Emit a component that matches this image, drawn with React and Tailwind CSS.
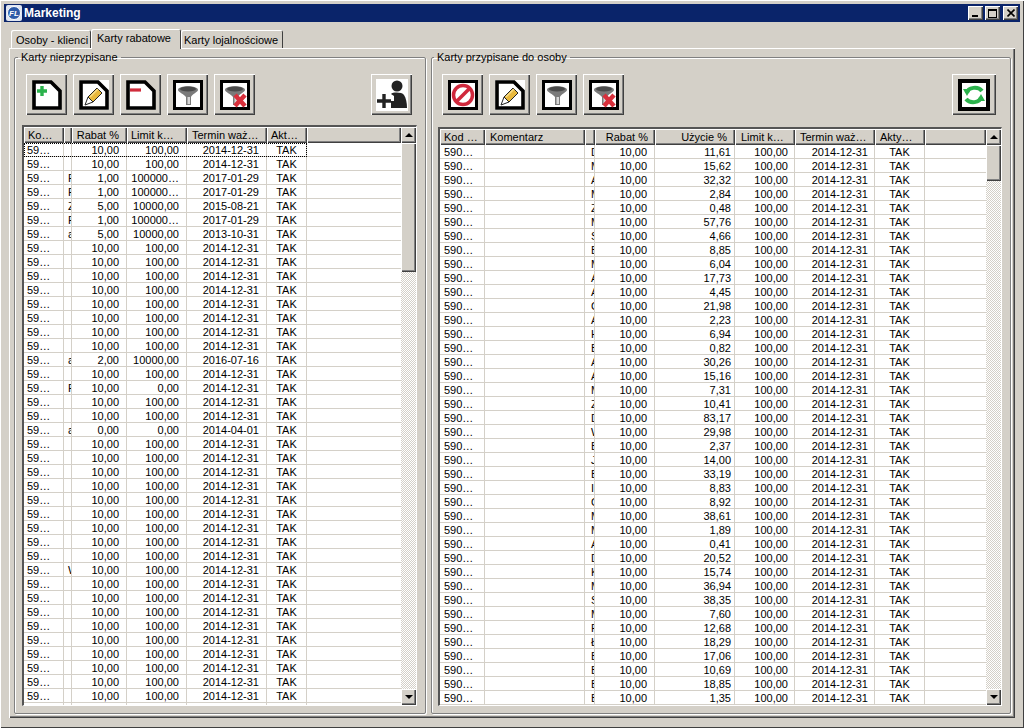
// App.jsx
const raised = 'bg-[#d4d0c8] shadow-[inset_1px_1px_0_#fff,inset_-1px_-1px_0_#404040,inset_-2px_-2px_0_#808080]';

const leftCols = [
  { w: 'w-[40px]', head: 'Ko…', cell: 'pl-[3px]', headCell: 'pl-[4px]' },
  { w: 'w-[8px]', head: '', cell: 'pl-[4px]', headCell: '' },
  { w: 'w-[55px]', head: 'Rabat %', cell: 'text-right pr-[7px]', headCell: 'text-right pr-[8px]' },
  { w: 'w-[60px]', head: 'Limit k…', cell: 'text-right pr-[7px]', headCell: 'pl-[4px]' },
  { w: 'w-[80px]', head: 'Termin waż…', cell: 'text-right pr-[7px]', headCell: 'pl-[5px]' },
  { w: 'w-[40px]', head: 'Akt…', cell: 'text-center', headCell: 'pl-[4px]' },
];

const rightCols = [
  { w: 'w-[45px]', head: 'Kod …', cell: 'pl-[4px]', headCell: 'pl-[4px]' },
  { w: 'w-[100px]', head: 'Komentarz', cell: '', headCell: 'pl-[5px]' },
  { w: 'w-[10px]', head: '', cell: 'pl-[6px]', headCell: '' },
  { w: 'w-[60px]', head: 'Rabat %', cell: 'text-right pr-[7px]', headCell: 'text-right pr-[7px]' },
  { w: 'w-[80px]', head: 'Użycie %', cell: 'text-right pr-[3px]', headCell: 'text-right pr-[8px]' },
  { w: 'w-[60px]', head: 'Limit k…', cell: 'text-right pr-[6px]', headCell: 'pl-[6px]' },
  { w: 'w-[80px]', head: 'Termin waż…', cell: 'text-right pr-[6px]', headCell: 'pl-[5px]' },
  { w: 'w-[50px]', head: 'Akty…', cell: 'text-center', headCell: 'pl-[5px]' },
];

const def = ['59…', '', '10,00', '100,00', '2014-12-31', 'TAK'];
const fcard = ['59…', 'F', '1,00', '100000…', '2017-01-29', 'TAK'];
const leftRows = Array.from({ length: 40 }, () => def);
leftRows[2] = fcard;
leftRows[3] = fcard;
leftRows[4] = ['59…', 'Z', '5,00', '10000,00', '2015-08-21', 'TAK'];
leftRows[5] = fcard;
leftRows[6] = ['59…', 'a', '5,00', '10000,00', '2013-10-31', 'TAK'];
leftRows[15] = ['59…', 'a', '2,00', '10000,00', '2016-07-16', 'TAK'];
leftRows[17] = ['59…', 'F', '10,00', '0,00', '2014-12-31', 'TAK'];
leftRows[20] = ['59…', 'a', '0,00', '0,00', '2014-04-01', 'TAK'];
leftRows[30] = ['59…', 'W', '10,00', '100,00', '2014-12-31', 'TAK'];
leftRows.push(['', '', '', '', '', '']);

const letters = 'D M A M Z M S B M A A C A H B A A M Z D W B J B I G M M A D K M S M R Ł B B B B'.split(' ');
const usage = '11,61 15,62 32,32 2,84 0,48 57,76 4,66 8,85 6,04 17,73 4,45 21,98 2,23 6,94 0,82 30,26 15,16 7,31 10,41 83,17 29,98 2,37 14,00 33,19 8,83 8,92 38,61 1,89 0,41 20,52 15,74 36,94 38,35 7,60 12,68 18,29 17,06 10,69 18,85 1,35'.split(' ');
const rightRows = usage.map((u, i) => ['590…', '', letters[i], '10,00', u, '100,00', '2014-12-31', 'TAK']);

function Doc({ children, corner }) {
  return (
    <svg viewBox="0 0 30 30" className="w-[30px] h-[30px]">
      {corner && <rect x="0" y="0" width="30" height="30" fill="#fff" />}
      <path d="M2 2H19L28 11V28H2Z" fill="#fff" stroke="#000" strokeWidth="3.6" />
      {children}
    </svg>
  );
}

function Frame({ children }) {
  return (
    <svg viewBox="0 0 30 30" className="w-[30px] h-[30px]">
      <rect x="1.5" y="1.5" width="27" height="27" fill="#fff" stroke="#000" strokeWidth="3" />
      {children}
    </svg>
  );
}

const Pencil = () => (
  <g>
    <path d="M9 17L18 8L23 13L14 22Z" fill="#e8b83c" stroke="#222" strokeWidth="1" />
    <path d="M9 17L6 25L14 22Z" fill="#fff" stroke="#222" strokeWidth="1" />
    <path d="M11 17L19 9" stroke="#f6dc8a" strokeWidth="1.5" />
  </g>
);

const Funnel = () => (
  <g>
    <path d="M5 10C5 5 25 5 25 10C25 12 19 14 18 17V25H13V17C11 14 5 12 5 10Z" fill="#7a7a7a" />
    <ellipse cx="15" cy="9" rx="8" ry="2.4" fill="#4a4a4a" />
    <rect x="14.5" y="17" width="2.5" height="7" fill="#d8d8d8" />
  </g>
);

const RedX = () => <path d="M15 15L25 26M25 15L15 26" stroke="#d8303c" strokeWidth="4.5" />;

const icons = {
  add: (
    <Doc>
      <path d="M10 6V16M5 11H15" stroke="#2bb24c" strokeWidth="3.4" />
    </Doc>
  ),
  edit: (
    <Doc corner>
      <Pencil />
    </Doc>
  ),
  remove: (
    <Doc>
      <path d="M4 10H15" stroke="#d02c3c" strokeWidth="3.2" />
    </Doc>
  ),
  filter: (
    <Frame>
      <Funnel />
    </Frame>
  ),
  unfilter: (
    <Frame>
      <Funnel />
      <RedX />
    </Frame>
  ),
  stop: (
    <Frame>
      <circle cx="15" cy="15" r="9.5" fill="#fff" stroke="#d0283c" strokeWidth="3.5" />
      <path d="M8.5 21.5L21.5 8.5" stroke="#d0283c" strokeWidth="3.5" />
    </Frame>
  ),
  person: (
    <svg viewBox="0 0 32 32" className="w-[32px] h-[32px]">
      <rect width="32" height="32" fill="#fff" />
      <circle cx="21" cy="7" r="5.5" fill="#222" />
      <path d="M15 15C17 13 26 13 28 16C30 19 31 24 31 29H15V22H18V17Z" fill="#222" />
      <path d="M8 15V29M1 22H15" stroke="#222" strokeWidth="3.4" />
    </svg>
  ),
  refresh: (
    <svg viewBox="0 0 32 32" className="w-[32px] h-[32px]">
      <rect x="2" y="2" width="28" height="28" fill="#fff" stroke="#000" strokeWidth="4" />
      <path d="M9 14C10 8 20 7 24 12" fill="none" stroke="#2bb24c" strokeWidth="4" />
      <path d="M5 10L13 10L9 17Z" fill="#2bb24c" />
      <path d="M23 18C22 24 12 25 8 20" fill="none" stroke="#2bb24c" strokeWidth="4" />
      <path d="M27 22L19 22L23 15Z" fill="#2bb24c" />
    </svg>
  ),
};

function ToolButton({ icon, wide }) {
  return (
    <button className={`${raised} ${wide ? 'w-[44px]' : 'w-[41px]'} h-[41px] flex items-center justify-center shrink-0`}>
      {icons[icon]}
    </button>
  );
}

function Scrollbar({ thumb }) {
  return (
    <div className="w-[15px] shrink-0 flex flex-col bg-[repeating-conic-gradient(#d4d0c8_0_25%,#fff_0_50%)] bg-[length:2px_2px]">
      <div className={`${raised} h-[16px] shrink-0 flex items-center justify-center`}>
        <div className="w-0 h-0 border-x-[4px] border-x-transparent border-b-[4px] border-b-black" />
      </div>
      <div className={`${raised} ${thumb} shrink-0`} />
      <div className="flex-1" />
      <div className={`${raised} h-[16px] shrink-0 flex items-center justify-center`}>
        <div className="w-0 h-0 border-x-[4px] border-x-transparent border-t-[4px] border-t-black" />
      </div>
    </div>
  );
}

function Grid({ cols, rows, size, thumb, focusFirst }) {
  return (
    <div className={`${size} flex border-l-2 border-t-2 border-r border-b border-l-[#555] border-t-[#555] border-r-white border-b-white overflow-hidden`}>
      <div className="flex-1 min-w-0 flex flex-col bg-white overflow-hidden">
        <div className="h-[16px] flex shrink-0">
          {cols.map((c, i) => (
            <div key={i} className={`${raised} ${c.w} ${c.headCell} shrink-0 leading-[16px] whitespace-nowrap overflow-hidden`}>
              {c.head}
            </div>
          ))}
          <div className={`${raised} flex-1`} />
        </div>
        {rows.map((row, r) => (
          <div key={r} className="flex h-[14px] shrink-0">
            <div className={`flex ${focusFirst && r === 0 ? 'outline-1 outline-dotted outline-black -outline-offset-1' : ''}`}>
              {cols.map((c, i) => (
                <div key={i} className={`${c.w} ${c.cell} shrink-0 h-[14px] leading-[15px] border-r border-b border-[#d4d0c8] whitespace-nowrap overflow-hidden`}>
                  {row[i]}
                </div>
              ))}
            </div>
            <div className="flex-1 border-b border-[#d4d0c8]" />
          </div>
        ))}
      </div>
      <Scrollbar thumb={thumb} />
    </div>
  );
}

function Group({ title, width, children }) {
  return (
    <fieldset className={`${width} h-[664px] shrink-0 border border-[#808080] rounded-[2px] shadow-[1px_1px_0_#fff,inset_1px_1px_0_#fff]`}>
      <legend className="-ml-[4px] px-[3px] h-[15px] leading-[15px]">{title}</legend>
      {children}
    </fieldset>
  );
}

function WinButton({ children, className = '' }) {
  return (
    <div className={`${raised} ${className} w-[15px] h-[14px] flex items-center justify-center`}>{children}</div>
  );
}

export default function App() {
  return (
    <div className="w-[1024px] h-[728px] bg-[#d4d0c8] p-[4px] flex flex-col text-black text-[11px] font-['Liberation_Sans',Arial,sans-serif] shadow-[inset_1px_1px_0_#fff,inset_-1px_-1px_0_#404040] overflow-hidden">
      <div className="h-[18px] shrink-0 bg-[#0a246a] flex items-center pl-[2px] pr-[2px]">
        <svg viewBox="0 0 16 16" className="w-[16px] h-[16px] mr-[2px]">
          <rect width="16" height="16" rx="2" fill="#dfe6f2" />
          <circle cx="8" cy="8" r="6.5" fill="#2c5aa8" stroke="#fff" strokeWidth="1" />
          <text x="8" y="11" textAnchor="middle" fontSize="8" fontStyle="italic" fontWeight="700" fill="#fff">FL</text>
        </svg>
        <span className="text-white font-bold text-[12px] flex-1">Marketing</span>
        <WinButton>
          <div className="w-[6px] h-[2px] bg-black mt-[6px] -ml-[2px]" />
        </WinButton>
        <WinButton className="ml-[2px]">
          <div className="w-[9px] h-[9px] border border-t-2 border-black" />
        </WinButton>
        <WinButton className="ml-[3px]">
          <svg viewBox="0 0 8 8" className="w-[8px] h-[8px]">
            <path d="M0.5 0.5L7.5 7.5M7.5 0.5L0.5 7.5" stroke="#000" strokeWidth="1.6" />
          </svg>
        </WinButton>
      </div>

      <div className="h-[26px] shrink-0 flex items-end pl-[7px]">
        <div className="h-[18px] w-[80px] rounded-t-[2px] shadow-[inset_1px_1px_0_#fff,inset_-1px_0_0_#404040] pl-[5px] leading-[20px]">Osoby - klienci</div>
        <div className="h-[20px] w-[90px] -mb-[1px] relative bg-[#d4d0c8] rounded-t-[2px] shadow-[inset_1px_1px_0_#fff,inset_-1px_0_0_#404040] pl-[6px] leading-[19px]">Karty rabatowe</div>
        <div className="h-[18px] w-[102px] rounded-t-[2px] shadow-[inset_1px_1px_0_#fff,inset_-1px_0_0_#404040] pl-[3px] leading-[20px]">Karty lojalnościowe</div>
      </div>

      <div className="ml-[5px] w-[1006px] h-[670px] shrink-0 flex gap-[5px] pl-[5px] pt-[2px] shadow-[inset_1px_1px_0_#fff,inset_-1px_-1px_0_#404040,inset_-2px_-2px_0_#808080]">
        <Group title="Karty nieprzypisane" width="w-[412px] px-[7px]">
          <div className="mt-[9px] flex gap-[6px] pl-[4px]">
            <ToolButton icon="add" />
            <ToolButton icon="edit" />
            <ToolButton icon="remove" />
            <ToolButton icon="filter" />
            <ToolButton icon="unfilter" />
            <div className="ml-[110px]">
              <ToolButton icon="person" />
            </div>
          </div>
          <div className="mt-[10px]">
            <Grid cols={leftCols} rows={leftRows} size="w-[395px] h-[581px]" thumb="h-[129px]" focusFirst />
          </div>
        </Group>
        <Group title="Karty przypisane do osoby" width="w-[580px] pl-[6px] pr-[8px]">
          <div className="mt-[9px] flex gap-[6px] pl-[4px]">
            <ToolButton icon="stop" />
            <ToolButton icon="edit" />
            <ToolButton icon="filter" />
            <ToolButton icon="unfilter" />
            <div className="ml-[322px]">
              <ToolButton icon="refresh" wide />
            </div>
          </div>
          <div className="mt-[12px]">
            <Grid cols={rightCols} rows={rightRows} size="w-[564px] h-[579px]" thumb="h-[36px]" />
          </div>
        </Group>
      </div>
    </div>
  );
}
